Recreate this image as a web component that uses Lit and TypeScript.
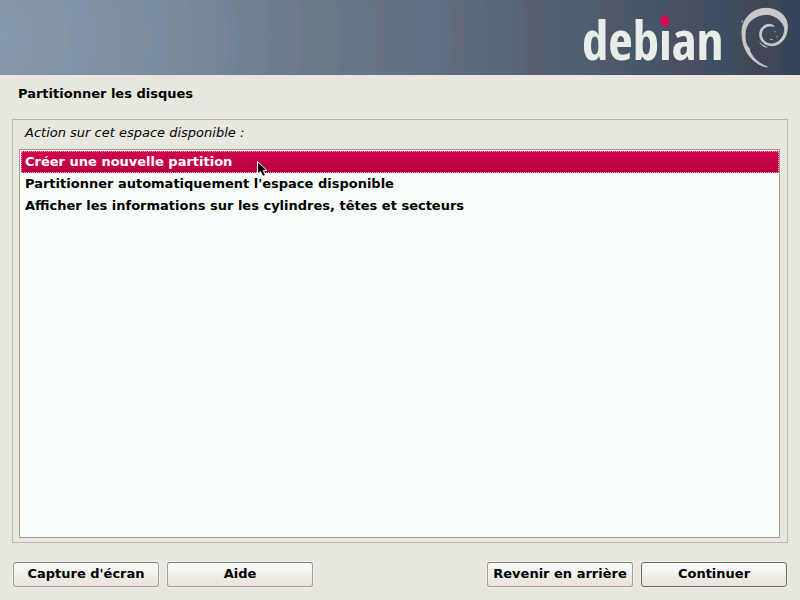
import { LitElement, html, css } from "lit";
import { customElement, state } from "lit/decorators.js";

@customElement("debian-banner")
class DebianBanner extends LitElement {
  static styles = css`
    :host {
      display: block;
    }
    .banner {
      height: 75px;
      display: flex;
      justify-content: flex-end;
      background:
        linear-gradient(
          to right,
          rgb(135 152 172 / 0.4),
          rgb(126 142 160 / 0.4) 140px,
          rgb(112 127 144 / 0.4) 270px,
          rgb(98 113 132 / 0.4) 410px,
          rgb(82 97 113 / 0.4) 560px,
          rgb(70 84 102 / 0.4) 680px,
          rgb(56 70 90 / 0.4) 790px
        ),
        radial-gradient(
          ellipse 810px 640px at 0 38px,
          #859cb0 0 10px,
          #879ab2 12px 27px,
          #8998a6 29px 46px,
          #8894a6 48px 67px,
          #7f93a8 71px 82px,
          #7f8fac 84px 96px,
          #808f9f 99px 119px,
          #808c9e 121px 147px,
          #758da0 150px 158px,
          #758aa1 159px 166px,
          #7a8a98 169px 193px,
          #7a8598 195px 226px,
          #6e839b 229px 236px,
          #6f808f 239px 269px,
          #707b8e 271px 302px,
          #6f758c 303px 306px,
          #697a87 309px 339px,
          #687488 341px 376px,
          #6c6f7f 378px 385px,
          #5f7180 388px 413px,
          #616d83 415px 450px,
          #636777 452px 463px,
          #5a6a78 466px 487px,
          #596478 489px 524px,
          #5a5d6d 527px 543px,
          #516070 546px 562px,
          #505d71 563px 600px,
          #525567 602px 622px,
          #4a5868 625px 632px,
          #465367 634px 667px,
          #4b4e5f 669px 703px,
          #3e4d63 706px 732px,
          #414c5a 734px 744px,
          #434556 746px 780px,
          #364459 784px
        );
    }
    .logo {
      width: 220px;
      height: 75px;
      display: block;
      overflow: visible;
    }
    .word {
      font-family: "Open Sans Condensed", "Liberation Sans Narrow", "DejaVu Sans Condensed", sans-serif;
      font-weight: bold;
      font-size: 53px;
      fill: #e8ede9;
    }
    .dotted {
      fill: url(#dot);
    }
  `;

  render() {
    return html`<header class="banner">
      <svg class="logo" viewBox="0 0 220 75" role="img" aria-label="debian">
        <defs>
          <linearGradient id="dot" gradientUnits="userSpaceOnUse" x1="0" y1="0" x2="0" y2="75">
            <stop offset="0.375" stop-color="#d70751" />
            <stop offset="0.375" stop-color="#e8ede9" />
          </linearGradient>
        </defs>
        <text class="word" x="2" y="60">deb<tspan class="dotted">i</tspan>an</text>
        <path fill="#d70751" d="M84.5 15l2 1 1.5 2 2 2-2 2-1.500 2-2 1-2-1-1.500-2-2-2 2-2 1.500-2z" />
        <g transform="translate(155 2)">
          <svg width="60" height="70" viewBox="0 0 180 210">
            <path
              fill="#c9c9ca"
              stroke="#c9c9ca"
              stroke-width="3"
              stroke-linejoin="round"
              d="M97 195C58 189 22 150 21 95C20 51 50 19 95 19C130 21 159 41 157 78C156 109 135 132 110 131C88 130 73 115 74 95C75 79 88 67 102 67C110 67 115 70 117 73C103 69 80 74 79 97C80 113 92 126 110 126C130 125 147 106 149 86C150 74 145 67 138 59C127 45 108 36 90 37C56 41 29 63 30 100C30 115 32 125 38 134L42 138L45 149C55 170 73 186 97 195Z"
            />
            <path fill="#c9c9ca" d="M20 55h3v7h-3zM119 88h3v3h-3zM124 103h3v3h-3zM106 111h6v3h-6zM72 118l8 8 10 6 8 3-2 2-10-3-9-7z" />
          </svg>
        </g>
      </svg>
    </header>`;
  }
}

@customElement("app-root")
class AppRoot extends LitElement {
  @state() private selected = 0;

  private actions = [
    "Créer une nouvelle partition",
    "Partitionner automatiquement l'espace disponible",
    "Afficher les informations sur les cylindres, têtes et secteurs",
  ];

  static styles = css`
    :host {
      display: flex;
      flex-direction: column;
      min-height: 100vh;
      position: relative;
      box-sizing: border-box;
      background: #e8e7df;
      color: #000;
      font: bold 13px/22px "DejaVu Sans", sans-serif;
    }
    main {
      flex: 1;
      display: flex;
      flex-direction: column;
      padding: 8px 12px 13px;
    }
    h1 {
      margin: 0 6px 14px;
      font-size: 13px;
      line-height: 22px;
    }
    .frame {
      flex: 1;
      display: flex;
      flex-direction: column;
      margin: 0;
      padding: 2px 7px 4px 6px;
      border: 1px solid #bcb7a5;
    }
    .caption {
      padding: 0 6px 5px;
      font-weight: normal;
      font-style: italic;
    }
    .list {
      flex: 1;
      padding: 1px 0 1px 1px;
      border: 1px solid #a89c87;
      background: #f7fdf9;
    }
    .row {
      display: block;
      box-sizing: border-box;
      height: 22px;
      padding: 0 3px;
      border: 1px dotted transparent;
      line-height: 20px;
    }
    .row.on {
      color: #fff;
      background: linear-gradient(#d2054f, #b8003f) border-box;
      border-color: #f3a8c4;
    }
    .pick {
      position: absolute;
      opacity: 0;
      margin: 0;
      pointer-events: none;
    }
    .bar {
      display: flex;
      gap: 8px;
      padding-top: 19px;
      margin: 0 1px;
    }
    .space {
      flex: 1;
    }
    button {
      width: 146px;
      height: 25px;
      padding: 0 0 2px;
      border: 1px solid #a89c8c;
      border-top-color: #8b8371;
      border-radius: 3px;
      background: linear-gradient(#fbfbf9, #f1f3f1 45%, #eeece6 60%, #e9e3dc);
      box-shadow: 0 0 0 1px #efeee8;
      color: #000;
      font: inherit;
      line-height: 20px;
    }
    .default {
      border-color: #6b655b;
    }
    .pointer {
      position: absolute;
      left: 256px;
      top: 160px;
      pointer-events: none;
    }
  `;

  render() {
    return html`
      <debian-banner></debian-banner>
      <main>
        <h1>Partitionner les disques</h1>
        <section class="frame">
          <div class="caption" id="caption">Action sur cet espace disponible :</div>
          <div class="list" role="radiogroup" aria-labelledby="caption">
            ${this.actions.map(
              (text, i) => html`<label class="row ${i === this.selected ? "on" : ""}"
                ><input
                  class="pick"
                  type="radio"
                  name="action"
                  .checked=${i === this.selected}
                  @change=${() => (this.selected = i)}
                />${text}</label
              >`
            )}
          </div>
        </section>
        <div class="bar">
          <button type="button">Capture d'écran</button>
          <button type="button">Aide</button>
          <span class="space"></span>
          <button type="button">Revenir en arrière</button>
          <button type="button" class="default">Continuer</button>
        </div>
      </main>
      <svg class="pointer" width="12" height="18" viewBox="0 0 12 18" aria-hidden="true">
        <path
          d="M1.5 1.5V14L4.5 11.500L6.500 16H9V14.500L7.300 10.500H11Z"
          fill="#000"
          stroke="#fff"
          stroke-width="1"
        />
      </svg>
    `;
  }
}
